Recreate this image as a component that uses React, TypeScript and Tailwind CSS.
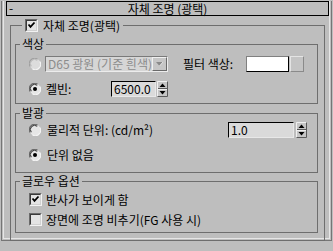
import React from "react";

const font = { fontFamily: '"Noto Sans CJK KR", "Noto Sans", sans-serif' };

function Radio({ checked = false, disabled = false }: { checked?: boolean; disabled?: boolean }) {
  return (
    <svg width="12" height="12" viewBox="0 0 12 12" className="shrink-0">
      <circle cx="6" cy="6" r="5.5" fill={disabled ? "#dcdcdc" : "#e6e6e6"} />
      <path d="M1.2 8.5 A5.3 5.3 0 0 1 8.5 1.2" stroke={disabled ? "#a0a0a0" : "#6a6a6a"} strokeWidth="1.2" fill="none" />
      <path d="M2.3 8.2 A4.2 4.2 0 0 1 8.2 2.3" stroke={disabled ? "#b8b8b8" : "#303030"} strokeWidth="1" fill="none" />
      <path d="M10.8 3.5 A5.3 5.3 0 0 1 3.5 10.8" stroke="#f4f4f4" strokeWidth="1.2" fill="none" />
      {checked && <circle cx="6" cy="6" r="2" fill="#000" />}
    </svg>
  );
}

function Check({ checked = false }: { checked?: boolean }) {
  return (
    <div className="w-[13px] h-[13px] shrink-0 border border-t-[#6a6a6a] border-l-[#6a6a6a] border-b-[#f2f2f2] border-r-[#f2f2f2]">
      <div className="w-full h-full bg-[#e4e4e4] border border-t-[#3a3a3a] border-l-[#3a3a3a] border-b-[#d0d0d0] border-r-[#d0d0d0]">
        {checked && (
          <svg width="9" height="9" viewBox="0 0 9 9" className="block">
            <path d="M1.5 3.5 L3.5 5.8 L7.5 1.5" stroke="#000" strokeWidth="1.8" fill="none" />
          </svg>
        )}
      </div>
    </div>
  );
}

function Arrows() {
  return (
    <svg width="11" height="16" viewBox="0 0 11 16" className="shrink-0">
      <rect x="0" y="0" width="11" height="16" fill="#c6c6c6" />
      <path d="M0.5 15.5 V0.5 H10.5" stroke="#f0f0f0" fill="none" />
      <path d="M10.5 0.5 V15.5 H0.5" stroke="#5a5a5a" fill="none" />
      <path d="M1 7.5 H10" stroke="#5a5a5a" />
      <path d="M1 8.5 H10" stroke="#f0f0f0" />
      <path d="M5.5 2.5 L8.5 6 L2.5 6 Z" fill="#000" />
      <path d="M2.5 10 L8.5 10 L5.5 13.5 Z" fill="#000" />
    </svg>
  );
}

function Field({ value, w }: { value: string; w: string }) {
  return (
    <div className={`${w} h-[16px] shrink-0 border border-t-[#000] border-l-[#000] border-b-[#e8e8e8] border-r-[#e8e8e8] bg-[#dadada] flex items-center pl-[2px] text-[12px] leading-none text-black`}>
      {value}
    </div>
  );
}

function Group({ title, h, mt, children }: { title: string; h: string; mt: string; children: React.ReactNode }) {
  return (
    <fieldset className={`${h} ${mt} border border-[#6e6e6e] min-w-0`}>
      <legend className="ml-[4px] px-[2px] text-[12px] leading-[14px] text-black">{title}</legend>
      {children}
    </fieldset>
  );
}

export default function App() {
  return (
    <div className="w-[333px] h-[251px] bg-[#bebebe] pt-[8px] overflow-hidden" style={font}>
      <div className="ml-[1px] w-[331px] h-[240px] border-l border-r border-b border-[#767676] px-[1px] pb-[1px]">
        <div className="h-full border-l border-r border-b border-[#e6e6e6]">
          <div className="-mt-[7px] ml-[2px] w-[323px] h-[15px] border border-black bg-[#bebebe] grid grid-cols-[20px_1fr_20px] items-center text-[12px] leading-none text-black">
            <span className="pl-[2px] -mt-[2px]">-</span>
            <span className="text-center whitespace-nowrap">자체 조명 (광택)</span>
            <span />
          </div>

          <fieldset className="mt-[2px] ml-[6px] w-[315px] h-[223px] border border-[#6e6e6e] pl-[4px] pr-[6px] min-w-0">
            <legend className="ml-[7px] px-[3px] h-[15px] flex items-center gap-[5px] text-[12px] leading-none text-black">
              <Check checked />
              <span>자체 조명(광택)</span>
            </legend>

            <div className="pt-[4px]">
              <Group title="색상" h="h-[67px]" mt="mt-0">
                <div className="flex flex-col gap-[9px] pt-[5px] pl-[13px] text-[12px] leading-none text-black">
                  <div className="h-[16px] flex items-center">
                    <Radio disabled />
                    <div className="ml-[4px] w-[123px] h-[16px] flex border border-t-[#7a7a7a] border-l-[#7a7a7a] border-b-[#ececec] border-r-[#ececec] bg-[#d6d6d6]">
                      <div className="flex-1 overflow-hidden whitespace-nowrap pl-[2px] flex items-center text-[#8c8c8c]">
                        D65 광원 (기준 흰색)
                      </div>
                      <div className="w-[15px] h-full bg-[#c6c6c6] border border-t-[#f0f0f0] border-l-[#f0f0f0] border-b-[#6a6a6a] border-r-[#6a6a6a] flex items-center justify-center">
                        <svg width="9" height="6" viewBox="0 0 9 6">
                          <path d="M1 1 H8 L4.5 5 Z" fill="#8a8a8a" />
                          <path d="M8 1 L4.5 5" stroke="#f4f4f4" strokeWidth="0.8" />
                        </svg>
                      </div>
                    </div>
                    <span className="ml-[15px] w-[63px] whitespace-nowrap">필터 색상:</span>
                    <div className="w-[43px] h-[16px] bg-white border border-t-[#808080] border-l-[#808080] border-b-[#000] border-r-[#000]" />
                    <div className="ml-[1px] w-[14px] h-[16px] bg-[#c4c4c4] border border-t-[#e4e4e4] border-l-[#e4e4e4] border-b-[#8a8a8a] border-r-[#8a8a8a]" />
                  </div>
                  <div className="h-[16px] flex items-center">
                    <Radio checked />
                    <span className="ml-[5px] w-[65px]">켈빈:</span>
                    <Field value="6500.0" w="w-[45px]" />
                    <div className="ml-[1px]">
                      <Arrows />
                    </div>
                  </div>
                </div>
              </Group>

              <Group title="발광" h="h-[67px]" mt="mt-[2px]">
                <div className="flex flex-col gap-[9px] pt-[2px] pl-[13px] text-[12px] leading-none text-black">
                  <div className="h-[16px] flex items-center">
                    <Radio />
                    <span className="ml-[6px] w-[181px] whitespace-nowrap">물리적 단위: (cd/m²)</span>
                    <Field value="1.0" w="w-[66px]" />
                    <div className="ml-[2px]">
                      <Arrows />
                    </div>
                  </div>
                  <div className="h-[16px] flex items-center">
                    <Radio checked />
                    <span className="ml-[6px]">단위 없음</span>
                  </div>
                </div>
              </Group>

              <Group title="글로우 옵션" h="h-[59px]" mt="mt-[1px]">
                <div className="flex flex-col gap-[7px] pt-[5px] pl-[13px] text-[12px] leading-none text-black">
                  <div className="h-[13px] flex items-center gap-[4px]">
                    <Check checked />
                    <span>반사가 보이게 함</span>
                  </div>
                  <div className="h-[13px] flex items-center gap-[4px]">
                    <Check />
                    <span className="whitespace-nowrap">장면에 조명 비추기(FG 사용 시)</span>
                  </div>
                </div>
              </Group>
            </div>
          </fieldset>
        </div>
      </div>
    </div>
  );
}
